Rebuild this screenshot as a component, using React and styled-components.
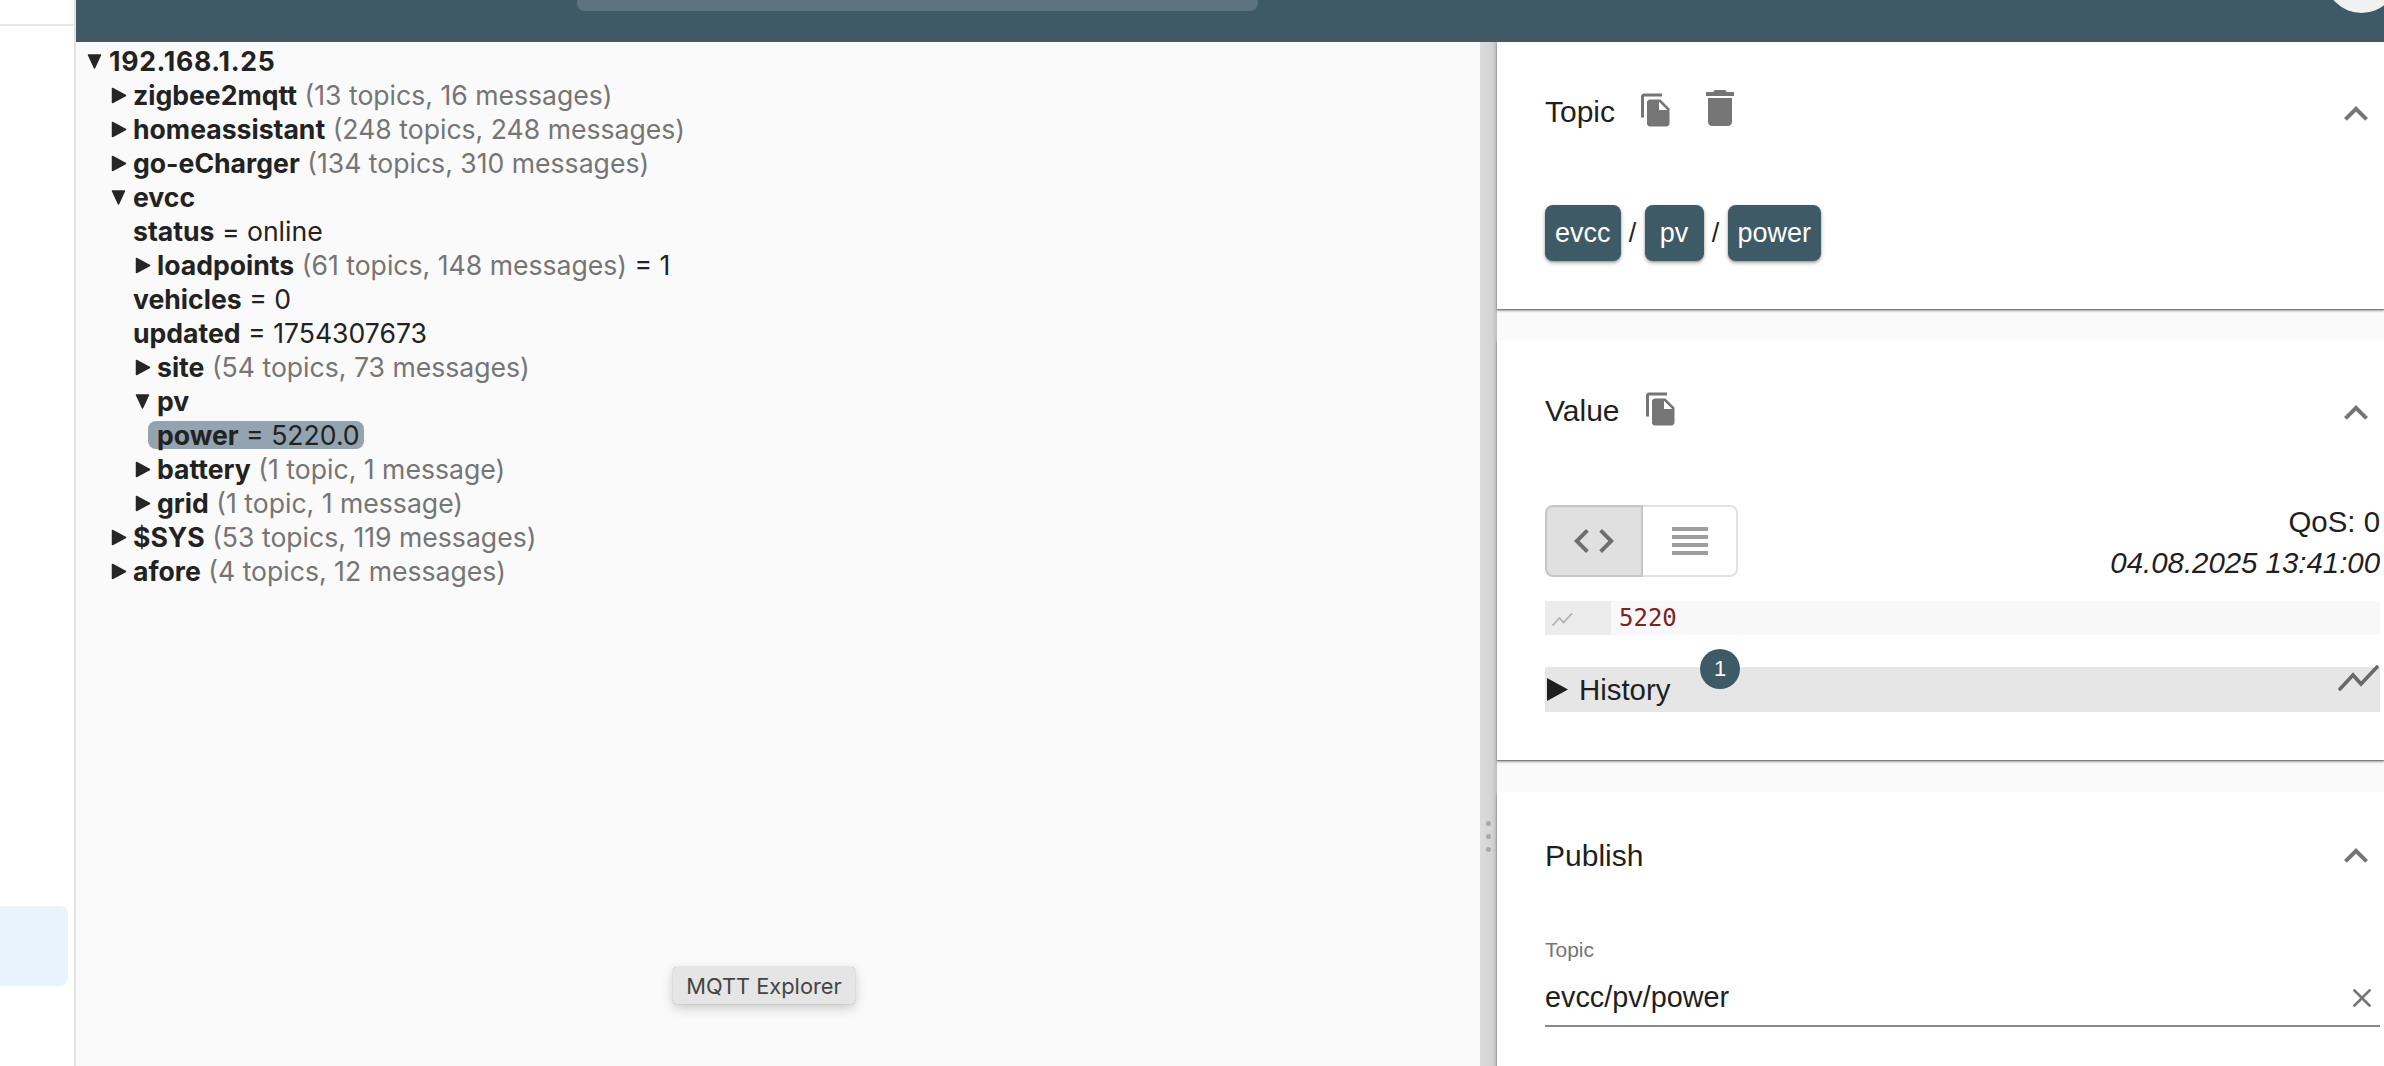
import React from "react";
import styled, { createGlobalStyle } from "styled-components";

const GlobalStyle = createGlobalStyle`
  html, body {
    margin: 0;
    height: 100%;
    overflow: hidden;
    background: #fafafa;
  }
  #root {
    height: 100%;
  }
  * {
    box-sizing: border-box;
  }
`;

const Page = styled.div`
  height: 1066px;
  display: flex;
  overflow: hidden;
`;

const Sidebar = styled.aside`
  width: 76px;
  flex: none;
  display: flex;
  flex-direction: column;
  background: #fff;
  border-right: 2px solid #e2e2e2;
`;

const SidebarHead = styled.div`
  height: 26px;
  flex: none;
  border-bottom: 2px solid #e8e8e8;
`;

const SidebarActive = styled.div`
  height: 80px;
  width: 68px;
  margin-top: 880px;
  background: #e8f3fd;
  border-radius: 0 8px 8px 0;
`;

const Main = styled.div`
  flex: 1;
  min-width: 0;
  display: flex;
  flex-direction: column;
`;

const Header = styled.header`
  height: 42px;
  flex: none;
  display: flex;
  align-items: flex-start;
  padding-left: 501px;
  background: #3f5a67;
  overflow: hidden;
`;

const SearchBox = styled.div`
  width: 681px;
  height: 11px;
  background: #5c7480;
  border-radius: 0 0 8px 8px;
`;

const Avatar = styled.div`
  width: 73px;
  height: 73px;
  flex: none;
  margin: -60px -14px 0 auto;
  border-radius: 50%;
  background: #f1f1f1;
`;

const Content = styled.div`
  flex: 1;
  min-height: 0;
  display: flex;
`;

const TreePane = styled.div`
  position: relative;
  width: 1404px;
  flex: none;
  padding: 2px 0 0 11px;
  background: #fafafa;
  font-family: Inter, "Noto Sans", sans-serif;
  font-size: 26.6px;
  color: #222;
`;

const Row = styled.div`
  display: flex;
  align-items: center;
  height: 34px;
  margin-left: ${(props) => (props.$leaf ? -2 : 0)}px;
  white-space: pre;
`;

const Children = styled.div`
  padding-left: 24px;
`;

const Arrow = styled.svg`
  width: 16px;
  height: 17px;
  margin-right: 6px;
  flex: none;
  fill: #262626;
  stroke: #262626;
  stroke-width: 1.5;
  stroke-linejoin: round;
`;

const Label = styled.span`
  display: inline-flex;
  align-items: center;
  height: 28px;
  padding: 0 4px 0 9px;
  margin: 0 -9px;
  border-radius: 8px;
  background: ${(props) => (props.$selected ? "#94a3b0" : "transparent")};
`;

const Name = styled.b`
  font-weight: 700;
  font-size: 26.6px;
  letter-spacing: ${(props) => (props.$host ? "0.7px" : "0")};
`;

const Count = styled.span`
  color: #757575;
`;

const Tooltip = styled.div`
  position: absolute;
  left: 597px;
  top: 925px;
  width: 182px;
  height: 37px;
  display: flex;
  align-items: center;
  justify-content: center;
  background: #e4e5e4;
  border-radius: 4px;
  box-shadow: 0 4px 12px rgba(0, 0, 0, 0.2), 0 0 1px rgba(0, 0, 0, 0.4);
  font-size: 21.8px;
  color: #444;
`;

const Splitter = styled.div`
  width: 17px;
  flex: none;
  display: flex;
  flex-direction: column;
  align-items: center;
  gap: 8px;
  padding-top: 779px;
  background: linear-gradient(90deg, #dcdcdc, #d4d4d4 70%, #bdbdbd);
`;

const SplitDot = styled.span`
  width: 5px;
  height: 5px;
  margin-left: -1px;
  border-radius: 50%;
  background: #a8a8a8;
`;

const Details = styled.div`
  flex: 1;
  min-width: 0;
  display: flex;
  flex-direction: column;
  font-family: "Liberation Sans", Arial, sans-serif;
  font-size: 29.4px;
  color: #1f1f1f;
`;

const Panel = styled.section`
  height: ${(props) => props.$height}px;
  flex: ${(props) => (props.$height ? "none" : "1")};
  margin-bottom: ${(props) => props.$gap || 0}px;
  padding: 0 4px 0 48px;
  background: #fff;
  box-shadow: 0 1px 1px rgba(0, 0, 0, 0.3), 0 2px 2px rgba(0, 0, 0, 0.25),
    0 3px 3px rgba(0, 0, 0, 0.06);
`;

const PanelHead = styled.div`
  height: ${(props) => props.$height}px;
  display: flex;
  align-items: center;
`;

const PanelTitle = styled.span`
  margin-bottom: ${(props) => (props.$raised ? 4 : 0)}px;
  font-size: 30px;
`;

const ExpandIcon = styled.svg`
  width: 48px;
  height: 48px;
  margin-left: auto;
  fill: #757575;
`;

const ActionIcon = styled.svg`
  width: ${(props) => props.$size}px;
  height: ${(props) => props.$size}px;
  margin: ${(props) => props.$margin};
  flex: none;
  fill: #757575;
`;

const Chips = styled.div`
  display: flex;
  align-items: center;
  margin-top: 19px;
`;

const Chip = styled.span`
  height: 56px;
  min-width: 59px;
  display: flex;
  align-items: center;
  justify-content: center;
  padding: 0 10px;
  background: #3f5a67;
  color: #fff;
  border-radius: 8px;
  font-size: 27px;
  box-shadow: 0 2px 4px rgba(0, 0, 0, 0.3), 0 1px 2px rgba(0, 0, 0, 0.2);
`;

const Slash = styled.span`
  width: 24px;
  text-align: center;
  font-size: 27px;
`;

const ValueTop = styled.div`
  display: flex;
  justify-content: space-between;
  margin-top: 19px;
`;

const Toggle = styled.div`
  width: 193px;
  height: 72px;
  display: flex;
`;

const ToggleOption = styled.div`
  flex: ${(props) => (props.$active ? "0 0 98px" : "1")};
  display: flex;
  align-items: center;
  justify-content: center;
  background: ${(props) => (props.$active ? "#e0e0e0" : "#fff")};
  border: 2px solid ${(props) => (props.$active ? "#c6c6c6" : "#e2e2e2")};
  border-left-width: ${(props) => (props.$active ? 2 : 0)}px;
  border-radius: ${(props) => (props.$active ? "8px 0 0 8px" : "0 8px 8px 0")};
`;

const ToggleIcon = styled.svg`
  width: 48px;
  height: 48px;
  fill: ${(props) => props.$color};
`;

const Meta = styled.div`
  height: 72px;
  display: flex;
  flex-direction: column;
  align-items: flex-end;
  gap: 7px;
  line-height: 34px;
`;

const MetaDate = styled.span`
  font-style: italic;
`;

const CodeBar = styled.div`
  height: 34px;
  display: flex;
  margin-top: 24px;
  background: #f8f8f8;
`;

const Gutter = styled.div`
  width: 66px;
  display: flex;
  align-items: center;
  padding: 4px 0 0 7px;
  background: #ececec;
`;

const ChartLine = styled.svg`
  width: ${(props) => (props.$small ? 21 : 42)}px;
  height: ${(props) => (props.$small ? 14 : 28)}px;
  flex: none;
  fill: none;
  stroke: ${(props) => (props.$small ? "#b0b0b0" : "#6a6a6a")};
  stroke-width: 3.6;
  stroke-linecap: round;
  stroke-linejoin: miter;
`;

const CodeText = styled.span`
  padding-left: 8px;
  font-family: "DejaVu Sans Mono", "Liberation Mono", monospace;
  font-size: 24px;
  line-height: 34px;
  color: #7a2226;
`;

const HistoryBar = styled.div`
  position: relative;
  height: 45px;
  display: flex;
  align-items: center;
  margin-top: 32px;
  padding-left: 2px;
  background: #e6e6e6;
`;

const HistoryArrow = styled.svg`
  width: 21px;
  height: 23px;
  margin: -1px 11px 0 0;
  fill: #1f1f1f;
`;

const HistoryLabel = styled.span`
  margin-top: 1px;
`;

const Badge = styled.span`
  position: absolute;
  left: 155px;
  top: -18px;
  width: 40px;
  height: 40px;
  display: flex;
  align-items: center;
  justify-content: center;
  border-radius: 50%;
  background: #3f5a67;
  color: #fff;
  font-size: 22px;
`;

const ChartSlot = styled.span`
  position: absolute;
  right: 0;
  top: -2px;
  display: flex;
`;

const FieldLabel = styled.div`
  margin-top: 18px;
  font-size: 21px;
  line-height: 24px;
  color: #757575;
`;

const FieldRow = styled.div`
  height: 57px;
  display: flex;
  align-items: center;
  margin-top: 8px;
  border-bottom: 2px solid #8a8a8a;
`;

const FieldInput = styled.input`
  flex: 1;
  min-width: 0;
  padding: 0;
  border: 0;
  outline: 0;
  background: transparent;
  font-family: inherit;
  font-size: 28.8px;
  color: #1f1f1f;
`;

const ClearIcon = styled.svg`
  width: 32px;
  height: 32px;
  margin-right: 2px;
  fill: #757575;
`;

const icons = {
  copy: "M16 1H4c-1.1 0-2 .9-2 2v14h2V3h12V1zm-1 4l6 6v10c0 1.1-.9 2-2 2H7.99C6.89 23 6 22.1 6 21l.01-14c0-1.1.89-2 1.99-2h7zm-1 7h5.5L14 6.5V12z",
  trash: "M6 19c0 1.1.9 2 2 2h8c1.1 0 2-.9 2-2V7H6v12zM19 4h-3.5l-1-1h-5l-1 1H5v2h14V4z",
  expand: "M12 8l-6 6 1.41 1.41L12 10.83l4.59 4.58L18 14z",
  code: "M9.4 16.6L4.8 12l4.6-4.6L8 6l-6 6 6 6 1.4-1.4zm5.2 0l4.6-4.6-4.6-4.6L16 6l6 6-6 6-1.4-1.4z",
  lines: "M3 15h18v-2H3v2zm0 4h18v-2H3v2zm0-8h18V9H3v2zm0-6v2h18V5H3z",
  clear: "M19 6.41L17.59 5 12 10.59 6.41 5 5 6.41 10.59 12 5 17.59 6.41 19 12 13.41 17.59 19 19 17.59 13.41 12z",
};

const tree = [
  {
    name: "192.168.1.25",
    host: true,
    open: true,
    children: [
      { name: "zigbee2mqtt", count: "(13 topics, 16 messages)" },
      { name: "homeassistant", count: "(248 topics, 248 messages)" },
      { name: "go-eCharger", count: "(134 topics, 310 messages)" },
      {
        name: "evcc",
        open: true,
        children: [
          { name: "status", value: "online", leaf: true },
          { name: "loadpoints", count: "(61 topics, 148 messages)", value: "1" },
          { name: "vehicles", value: "0", leaf: true },
          { name: "updated", value: "1754307673", leaf: true },
          { name: "site", count: "(54 topics, 73 messages)" },
          {
            name: "pv",
            open: true,
            children: [{ name: "power", value: "5220.0", leaf: true, selected: true }],
          },
          { name: "battery", count: "(1 topic, 1 message)" },
          { name: "grid", count: "(1 topic, 1 message)" },
        ],
      },
      { name: "$SYS", count: "(53 topics, 119 messages)" },
      { name: "afore", count: "(4 topics, 12 messages)" },
    ],
  },
];

const TreeNode = ({ node }) => (
  <>
    <Row $leaf={node.leaf}>
      {!node.leaf && (
        <Arrow viewBox="0 0 16 17">
          <path d={node.open ? "M1.5 2h12L7.5 15z" : "M1.5 1.5l13 7-13 7z"} />
        </Arrow>
      )}
      <Label $selected={node.selected}>
        <Name $host={node.host}>{node.name}</Name>
        {node.count && <Count> {node.count}</Count>}
        {node.value && ` = ${node.value}`}
      </Label>
    </Row>
    {node.children && (
      <Children>
        {node.children.map((child) => (
          <TreeNode key={child.name} node={child} />
        ))}
      </Children>
    )}
  </>
);

const Expand = () => (
  <ExpandIcon viewBox="0 0 24 24">
    <path d={icons.expand} />
  </ExpandIcon>
);

const Trend = ({ small }) => (
  <ChartLine viewBox="0 0 42 28" $small={small}>
    <polyline points="2,24 15,10 23,19 39,2" />
  </ChartLine>
);

export default function App() {
  return (
    <Page>
      <GlobalStyle />
      <Sidebar>
        <SidebarHead />
        <SidebarActive />
      </Sidebar>
      <Main>
        <Header>
          <SearchBox />
          <Avatar />
        </Header>
        <Content>
          <TreePane>
            {tree.map((node) => (
              <TreeNode key={node.name} node={node} />
            ))}
            <Tooltip>MQTT Explorer</Tooltip>
          </TreePane>
          <Splitter>
            <SplitDot />
            <SplitDot />
            <SplitDot />
          </Splitter>
          <Details>
            <Panel $height={267} $gap={31}>
              <PanelHead $height={144}>
                <PanelTitle $raised>Topic</PanelTitle>
                <ActionIcon $size={36} viewBox="0 0 24 24" $margin="-8px 0 0 23px">
                  <path d={icons.copy} />
                </ActionIcon>
                <ActionIcon $size={48} viewBox="0 0 24 24" $margin="-12px 0 0 22px">
                  <path d={icons.trash} />
                </ActionIcon>
                <Expand />
              </PanelHead>
              <Chips>
                <Chip>evcc</Chip>
                <Slash>/</Slash>
                <Chip>pv</Chip>
                <Slash>/</Slash>
                <Chip>power</Chip>
              </Chips>
            </Panel>
            <Panel $height={420} $gap={32}>
              <PanelHead $height={146}>
                <PanelTitle $raised>Value</PanelTitle>
                <ActionIcon $size={36} viewBox="0 0 24 24" $margin="-8px 0 0 23px">
                  <path d={icons.copy} />
                </ActionIcon>
                <Expand />
              </PanelHead>
              <ValueTop>
                <Toggle>
                  <ToggleOption $active>
                    <ToggleIcon viewBox="0 0 24 24" $color="#6e6e6e">
                      <path d={icons.code} />
                    </ToggleIcon>
                  </ToggleOption>
                  <ToggleOption>
                    <ToggleIcon viewBox="0 0 24 24" $color="#9e9e9e">
                      <path d={icons.lines} />
                    </ToggleIcon>
                  </ToggleOption>
                </Toggle>
                <Meta>
                  <span>QoS: 0</span>
                  <MetaDate>04.08.2025 13:41:00</MetaDate>
                </Meta>
              </ValueTop>
              <CodeBar>
                <Gutter>
                  <Trend small />
                </Gutter>
                <CodeText>5220</CodeText>
              </CodeBar>
              <HistoryBar>
                <HistoryArrow viewBox="0 0 21 23">
                  <path d="M0 0l21 11.5L0 23z" />
                </HistoryArrow>
                <HistoryLabel>History</HistoryLabel>
                <Badge>1</Badge>
                <ChartSlot>
                  <Trend />
                </ChartSlot>
              </HistoryBar>
            </Panel>
            <Panel>
              <PanelHead $height={128}>
                <PanelTitle>Publish</PanelTitle>
                <Expand />
              </PanelHead>
              <FieldLabel>Topic</FieldLabel>
              <FieldRow>
                <FieldInput defaultValue="evcc/pv/power" />
                <ClearIcon viewBox="0 0 24 24">
                  <path d={icons.clear} />
                </ClearIcon>
              </FieldRow>
            </Panel>
          </Details>
        </Content>
      </Main>
    </Page>
  );
}
